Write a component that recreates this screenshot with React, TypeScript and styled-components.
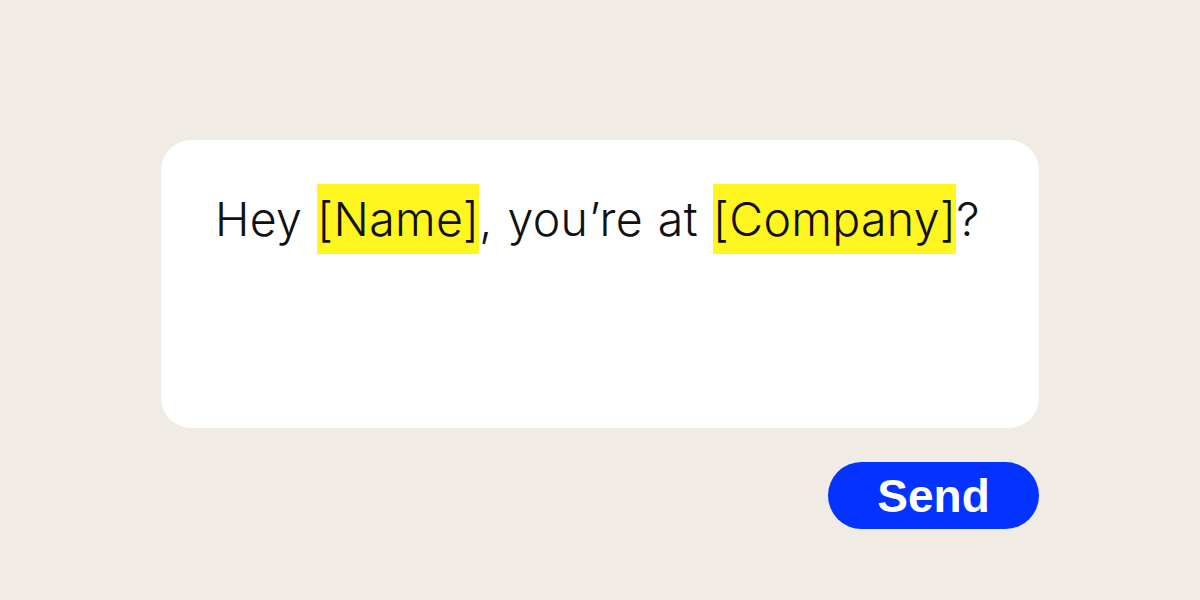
import React from 'react';
import styled, { createGlobalStyle } from 'styled-components';

const GlobalStyle = createGlobalStyle`
  html, body {
    margin: 0;
    padding: 0;
    background: #f0ebe4;
  }
`;

const Page = styled.div`
  width: 1200px;
  height: 600px;
  display: flex;
  justify-content: center;
  padding-top: 140px;
  box-sizing: border-box;
`;

const Column = styled.div`
  width: 878px;
  display: flex;
  flex-direction: column;
`;

const Card = styled.div`
  height: 288px;
  background: #ffffff;
  border-radius: 30px;
  padding: 44px 54px;
  box-sizing: border-box;
`;

const Message = styled.p`
  margin: 0;
  font-family: Inter, 'Noto Sans', sans-serif;
  font-size: 46.5px;
  font-weight: 350;
  letter-spacing: 0.3px;
  word-spacing: 1.5px;
  line-height: 70px;
  color: #111111;
  white-space: nowrap;
`;

const Tag = styled.span`
  background: #fff620;
  display: inline-block;
  line-height: 70px;
`;

const Actions = styled.div`
  display: flex;
  justify-content: flex-end;
  margin-top: 34px;
`;

const SendButton = styled.button`
  width: 211px;
  height: 67px;
  border: none;
  border-radius: 34px;
  background: #0433ff;
  color: #ffffff;
  font-family: 'Liberation Sans', Arial, sans-serif;
  font-weight: 700;
  font-size: 46px;
  cursor: pointer;
  padding: 0;
`;

const App = (): JSX.Element => (
  <>
    <GlobalStyle />
    <Page>
      <Column>
        <Card>
          <Message>
            Hey <Tag>[Name]</Tag>, you’re at <Tag>[Company]</Tag>?
          </Message>
        </Card>
        <Actions>
          <SendButton>Send</SendButton>
        </Actions>
      </Column>
    </Page>
  </>
);

export default App;
